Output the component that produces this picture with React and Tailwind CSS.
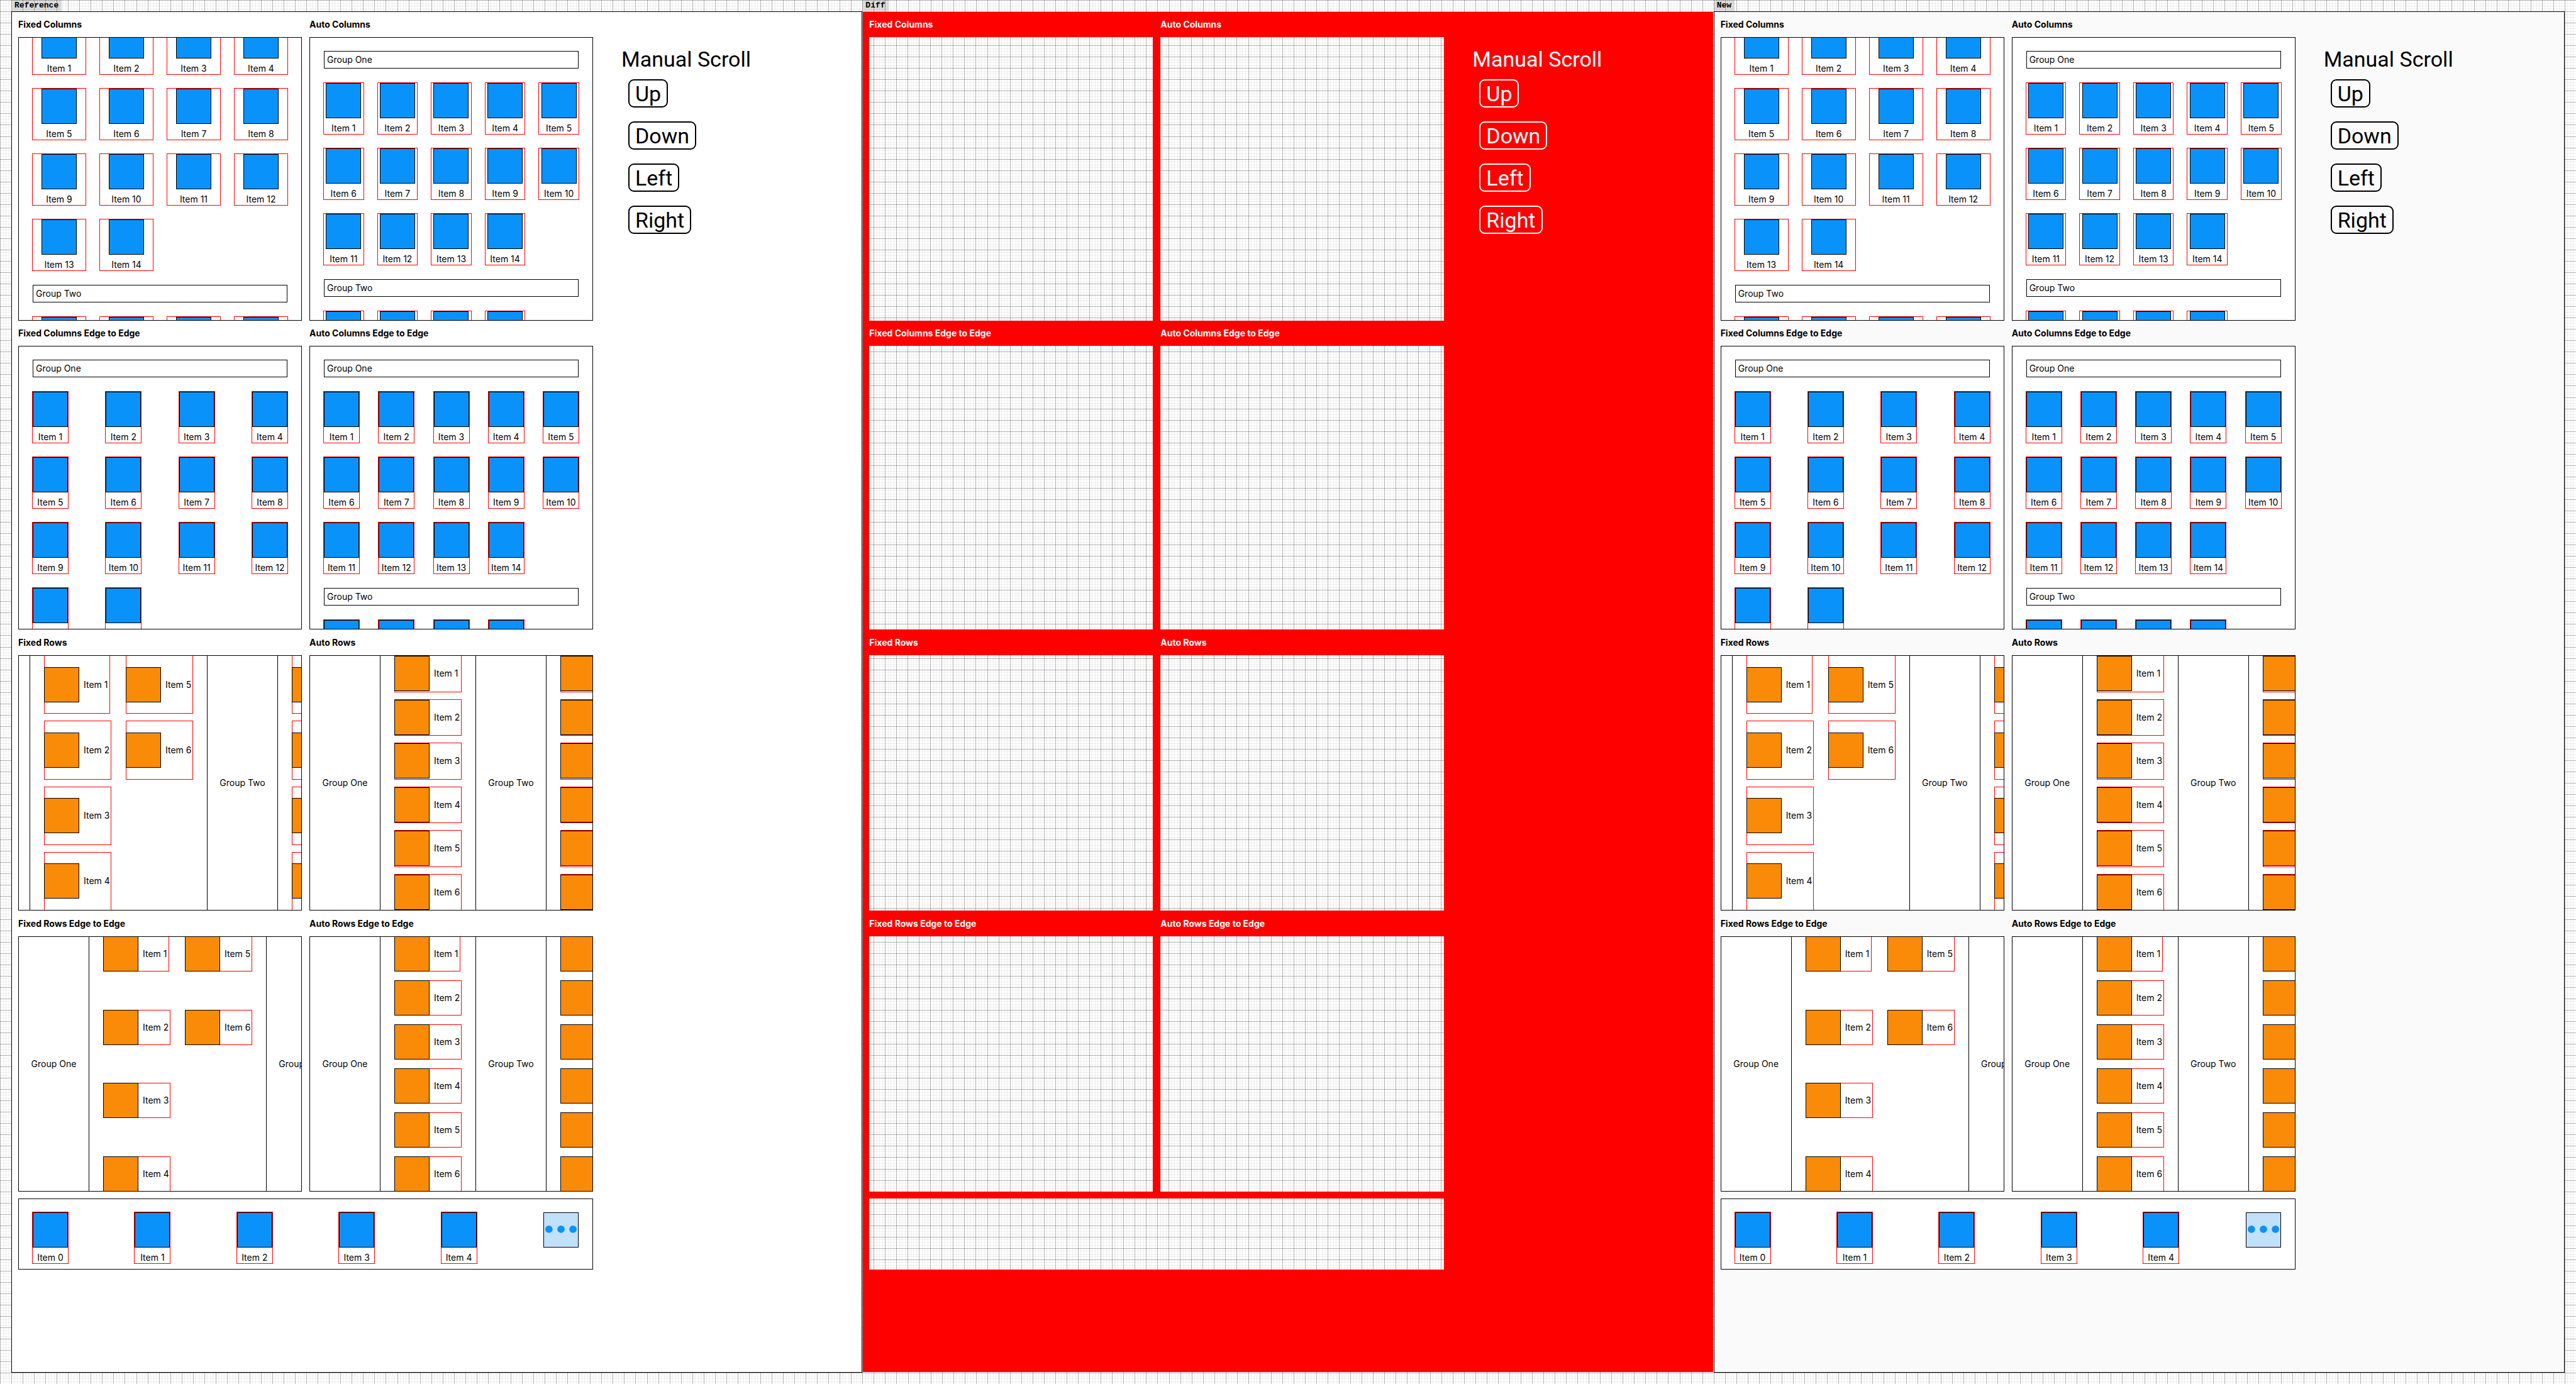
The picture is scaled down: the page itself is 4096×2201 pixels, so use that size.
import React from "react";
import clsx from "clsx";

// 227 major cells across the window, each split in four minor cells.
const GRID_PAPER =
  "bg-white bg-fixed bg-[image:repeating-linear-gradient(to_right,rgb(0_0_0/0.25)_0_1px,transparent_1px_calc(100vw/227)),repeating-linear-gradient(to_bottom,rgb(0_0_0/0.25)_0_1px,transparent_1px_calc(100vw/227)),repeating-linear-gradient(to_right,rgb(0_0_0/0.06)_0_1px,transparent_1px_calc(100vw/908)),repeating-linear-gradient(to_bottom,rgb(0_0_0/0.06)_0_1px,transparent_1px_calc(100vw/908))]";

const numbered = (count, labelled = count) =>
  Array.from({ length: count }, (_, i) => (i < labelled ? `Item ${i + 1}` : null));

function ColumnItem({ label }) {
  return (
    <li className="flex h-[81px] flex-col items-center outline outline-[#ff0000]">
      <span className="size-14 shrink-0 border border-black bg-[#0993fa]" />
      {label && <span className="mt-2 text-[14px] leading-4 whitespace-nowrap">{label}</span>}
    </li>
  );
}

function Band({ title }) {
  return (
    <h3 className="flex h-7 items-center border border-black pl-1 text-[14px] leading-4">{title}</h3>
  );
}

function ColumnGroup({ title, items, layout }) {
  return (
    <>
      {title && <Band title={title} />}
      <ul className={clsx("grid gap-y-[23px]", layout)}>
        {items.map((label, i) => (
          <ColumnItem key={i} label={label} />
        ))}
      </ul>
    </>
  );
}

function ColumnPanel({ groups, layout, scrolled }) {
  return (
    <div
      className={clsx(
        "-mx-px flex flex-col gap-[23px] px-[23px]",
        scrolled ? "-mt-[23px]" : "pt-[21px]",
      )}
    >
      {groups.map((group, i) => (
        <ColumnGroup key={i} title={group.title} items={group.items} layout={layout} />
      ))}
    </div>
  );
}

function RowItem({ label, natural }) {
  return (
    <li
      className={clsx(
        "relative flex items-center border border-[#ff0000]",
        natural ? "w-[105px]" : "w-[107px]",
      )}
    >
      <span className="z-10 -my-px -ml-px size-14 shrink-0 border border-black bg-[#f98b09]" />
      {label && <span className="ml-[7px] text-[14px] leading-4 whitespace-nowrap">{label}</span>}
    </li>
  );
}

function RowPanel({ groups, layout, narrowFirst }) {
  return (
    <div className="-my-px -ml-px flex">
      {groups.map((group, i) => (
        <React.Fragment key={i}>
          <h3
            className={clsx(
              "flex shrink-0 items-center justify-center border-black text-[14px] leading-4",
              group.title === null ? "w-[19px] border-r" : "w-[113px] border-x",
            )}
          >
            {group.title}
          </h3>
          <ul className={clsx("mr-[22px] ml-[22px] grid shrink-0 grid-flow-col gap-x-[23px]", layout)}>
            {group.items.map((label, j) => (
              <RowItem key={j} label={label} natural={narrowFirst && i === 0 && j === 0} />
            ))}
          </ul>
        </React.Fragment>
      ))}
    </div>
  );
}

function DemoPanel({ title, diff, tall, headingHeight, children }) {
  return (
    <section>
      <h2
        className={clsx(
          "flex items-center text-[14px] leading-4 font-bold",
          headingHeight,
          diff && "text-white",
        )}
      >
        {title}
      </h2>
      <div
        className={clsx(
          "flex w-[451px] overflow-hidden",
          tall ? "h-[451px] flex-col" : "h-[406px] flex-row",
          diff ? GRID_PAPER : "border border-black bg-white",
        )}
      >
        {!diff && children}
      </div>
    </section>
  );
}

function ScrollControls({ diff }) {
  return (
    <div className={clsx("pt-[55px] font-[Roboto,sans-serif] text-[34px] leading-10", diff && "text-white")}>
      <p>Manual Scroll</p>
      <div className="mt-3 ml-[11px] flex flex-col items-start gap-[22px]">
        {["Up", "Down", "Left", "Right"].map((name) => (
          <button
            key={name}
            type="button"
            className={clsx(
              "flex h-[45px] items-center rounded-[9px] border-2 px-[9px]",
              diff ? "border-white" : "border-black",
            )}
          >
            {name}
          </button>
        ))}
      </div>
    </div>
  );
}

function Toolbar({ diff }) {
  if (diff) return <div className={clsx("mt-[11px] h-[113px]", GRID_PAPER)} />;
  return (
    <div className="mt-[11px] h-[113px] border border-black bg-white px-[22px] pt-[21px]">
      <ul className="grid grid-cols-[repeat(6,56px)] justify-between">
        {[0, 1, 2, 3, 4].map((n) => (
          <ColumnItem key={n} label={`Item ${n}`} />
        ))}
        <li>
          <button
            type="button"
            aria-label="More items"
            className="flex size-14 items-center justify-center border border-black bg-[#c1e0fa]"
          >
            <svg viewBox="0 0 96 96" className="size-full" fill="#0993fa" aria-hidden="true">
              <circle cx="14" cy="46" r="10.5" />
              <circle cx="48" cy="46" r="10.5" />
              <circle cx="82" cy="46" r="10.5" />
            </svg>
          </button>
        </li>
      </ul>
    </div>
  );
}

function Board({ name, variant }) {
  const diff = variant === "diff";
  const columns = "h-10";
  const rows = "h-[41px]";
  return (
    <article className="flex flex-col">
      <h1 className="flex h-[18px] items-center self-start bg-black/13 px-[5px] font-['Liberation_Mono',monospace] text-[13px] leading-4 font-bold">
        {name}
      </h1>
      <div
        className={clsx(
          "flex flex-1 gap-[45px] border pl-2.5",
          diff && "border-transparent bg-[#ff0000] bg-clip-padding",
          variant === "reference" && "border-black bg-white",
          variant === "new" && "border-black bg-[#fafafa]",
        )}
      >
        <div>
          <div className="grid grid-cols-[auto_auto] gap-x-3">
            <DemoPanel title="Fixed Columns" diff={diff} tall headingHeight={columns}>
              <ColumnPanel
                scrolled
                layout="grid-cols-4 gap-x-[23px]"
                groups={[{ items: numbered(14) }, { title: "Group Two", items: numbered(4, 0) }]}
              />
            </DemoPanel>
            <DemoPanel title="Auto Columns" diff={diff} tall headingHeight={columns}>
              <ColumnPanel
                layout="grid-cols-5 gap-x-[23px]"
                groups={[
                  { title: "Group One", items: numbered(14) },
                  { title: "Group Two", items: numbered(4, 0) },
                ]}
              />
            </DemoPanel>
            <DemoPanel title="Fixed Columns Edge to Edge" diff={diff} tall headingHeight={columns}>
              <ColumnPanel
                layout="grid-cols-[repeat(4,56px)] justify-between"
                groups={[{ title: "Group One", items: numbered(14, 12) }]}
              />
            </DemoPanel>
            <DemoPanel title="Auto Columns Edge to Edge" diff={diff} tall headingHeight={columns}>
              <ColumnPanel
                layout="grid-cols-[repeat(5,56px)] justify-between"
                groups={[
                  { title: "Group One", items: numbered(14) },
                  { title: "Group Two", items: numbered(4, 0) },
                ]}
              />
            </DemoPanel>
            <DemoPanel title="Fixed Rows" diff={diff} headingHeight={rows}>
              <RowPanel
                narrowFirst
                layout="grid-rows-4 gap-y-[11px]"
                groups={[
                  { title: null, items: numbered(6) },
                  { title: "Group Two", items: numbered(4, 0) },
                ]}
              />
            </DemoPanel>
            <DemoPanel title="Auto Rows" diff={diff} headingHeight={rows}>
              <RowPanel
                layout="grid-rows-6 gap-y-[11px]"
                groups={[
                  { title: "Group One", items: numbered(6) },
                  { title: "Group Two", items: numbered(6, 0) },
                ]}
              />
            </DemoPanel>
            <DemoPanel title="Fixed Rows Edge to Edge" diff={diff} headingHeight={rows}>
              <RowPanel
                narrowFirst
                layout="grid-rows-[repeat(4,56px)] content-between"
                groups={[
                  { title: "Group One", items: numbered(6) },
                  { title: "Group Two", items: [] },
                ]}
              />
            </DemoPanel>
            <DemoPanel title="Auto Rows Edge to Edge" diff={diff} headingHeight={rows}>
              <RowPanel
                narrowFirst
                layout="grid-rows-[repeat(6,56px)] content-between"
                groups={[
                  { title: "Group One", items: numbered(6) },
                  { title: "Group Two", items: numbered(6, 0) },
                ]}
              />
            </DemoPanel>
          </div>
          <Toolbar diff={diff} />
        </div>
        <ScrollControls diff={diff} />
      </div>
    </article>
  );
}

export default function App() {
  return (
    <main
      className={clsx(
        "grid min-h-screen grid-cols-3 px-[18px] pb-[18px] font-[Inter,sans-serif] text-black",
        GRID_PAPER,
      )}
    >
      <Board name="Reference" variant="reference" />
      <Board name="Diff" variant="diff" />
      <Board name="New" variant="new" />
    </main>
  );
}
